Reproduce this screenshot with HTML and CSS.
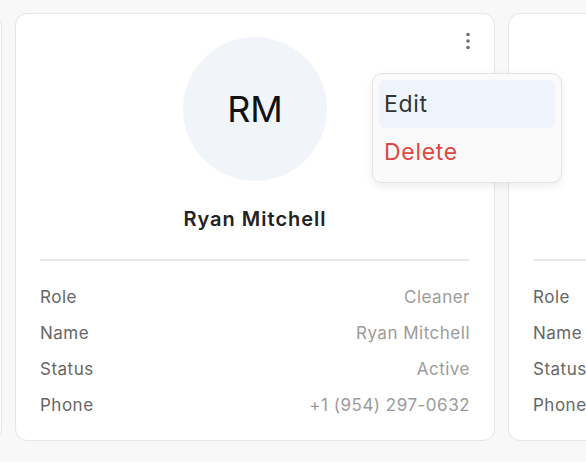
FILE: index.html
```html
<!DOCTYPE html>
<html lang="en">
<head>
<meta charset="utf-8">
<title>Staff cards</title>
<link rel="stylesheet" href="styles.css">
</head>
<body>
<div class="cards">
  <div class="card card-peek"></div>
  <div class="card">
    <button class="kebab" aria-label="More">
      <svg width="6" height="18" viewBox="0 0 6 18"><circle cx="3" cy="2.5" r="1.8"/><circle cx="3" cy="9" r="1.8"/><circle cx="3" cy="15.5" r="1.8"/></svg>
    </button>
    <div class="menu">
      <div class="menu-item active">Edit</div>
      <div class="menu-item danger">Delete</div>
    </div>
    <div class="avatar">RM</div>
    <div class="name">Ryan Mitchell</div>
    <div class="divider"></div>
    <div class="rows">
      <div class="row"><span class="label">Role</span><span class="value">Cleaner</span></div>
      <div class="row"><span class="label">Name</span><span class="value">Ryan Mitchell</span></div>
      <div class="row"><span class="label">Status</span><span class="value">Active</span></div>
      <div class="row"><span class="label">Phone</span><span class="value">+1 (954) 297-0632</span></div>
    </div>
  </div>
  <div class="card">
    <div class="avatar"></div>
    <div class="name"></div>
    <div class="divider"></div>
    <div class="rows">
      <div class="row"><span class="label">Role</span></div>
      <div class="row"><span class="label">Name</span></div>
      <div class="row"><span class="label">Status</span></div>
      <div class="row"><span class="label">Phone</span></div>
    </div>
  </div>
</div>
</body>
</html>
```

FILE: styles.css
```css
* { box-sizing: border-box; }
html, body {
  margin: 0;
  padding: 0;
  background: #f8f8f8;
  overflow: hidden;
  font-family: "Inter", "Open Sans", sans-serif;
}
.cards {
  display: flex;
  gap: 13px;
  padding-top: 13px;
  margin-left: -478px;
}
.card {
  position: relative;
  flex: 0 0 480px;
  width: 480px;
  height: 428px;
  background: #ffffff;
  border: 1px solid #e5e5e5;
  border-radius: 12px;
  padding: 23px 24px 17px;
  display: flex;
  flex-direction: column;
  align-items: center;
}
.kebab {
  position: absolute;
  top: 17px;
  right: 21px;
  width: 10px;
  height: 20px;
  padding: 0;
  border: 0;
  background: none;
  display: flex;
  align-items: center;
  justify-content: center;
  fill: #6f6f6f;
}
.avatar {
  width: 144px;
  height: 144px;
  flex: 0 0 144px;
  border-radius: 50%;
  background: #f1f5fa;
  display: flex;
  align-items: center;
  justify-content: center;
  font-family: "Inter", sans-serif;
  font-size: 36px;
  color: #111;
  font-weight: 400;
}
.name {
  margin-top: 24px;
  height: 28px;
  flex: 0 0 28px;
  line-height: 28px;
  font-size: 20px;
  font-weight: 600;
  color: #222;
  letter-spacing: 1px;
}
.divider {
  margin-top: 26px;
  width: 100%;
  height: 2px;
  background: #e6eaef;
}
.rows {
  margin-top: 18px;
  width: 100%;
}
.row {
  display: flex;
  justify-content: space-between;
  height: 36px;
  line-height: 36px;
  font-size: 17px;
  letter-spacing: 0.5px;
  white-space: nowrap;
}
.label { color: #666; }
.value { color: #9b9b9b; }
.menu {
  position: absolute;
  z-index: 10;
  left: 356px;
  top: 59px;
  width: 190px;
  padding: 6px;
  background: #fafafa;
  border: 1px solid #e4e4e7;
  border-radius: 10px;
  box-shadow: 0 3px 8px rgba(0, 0, 0, 0.08);
}
.menu-item {
  height: 48px;
  line-height: 48px;
  padding-left: 5px;
  font-size: 23px;
  letter-spacing: 0.7px;
  color: #333;
  border-radius: 7px;
}
.menu-item.active { background: #eff4fc; }
.menu-item.danger { color: #e0473f; }
```
